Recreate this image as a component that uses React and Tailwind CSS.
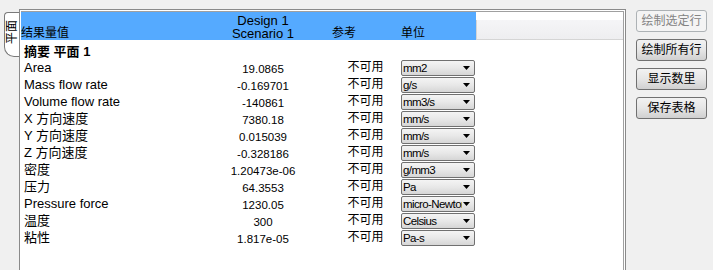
import React from 'react';

const rows = [
  { name: 'Area', value: '19.0865', unit: 'mm2' },
  { name: 'Mass flow rate', value: '-0.169701', unit: 'g/s' },
  { name: 'Volume flow rate', value: '-140861', unit: 'mm3/s' },
  { name: 'X 方向速度', value: '7380.18', unit: 'mm/s' },
  { name: 'Y 方向速度', value: '0.015039', unit: 'mm/s' },
  { name: 'Z 方向速度', value: '-0.328186', unit: 'mm/s' },
  { name: '密度', value: '1.20473e-06', unit: 'g/mm3' },
  { name: '压力', value: '64.3553', unit: 'Pa' },
  { name: 'Pressure force', value: '1230.05', unit: 'micro-Newton' },
  { name: '温度', value: '300', unit: 'Celsius' },
  { name: '粘性', value: '1.817e-05', unit: 'Pa-s' },
];

const buttons = [
  { label: '绘制选定行', disabled: true },
  { label: '绘制所有行' },
  { label: '显示数里' },
  { label: '保存表格' },
];

const UnitSelect = ({ unit }) => (
  <div className="ml-[1px] mt-[1px] flex h-[16px] w-[74px] items-center rounded-[2px] border border-[#707070] bg-gradient-to-b from-[#f4f4f4] via-[#e8e8e8] to-[#d6d6d6]">
    <span className="flex-1 overflow-hidden whitespace-nowrap pl-[1px] text-[11.5px] leading-[14px] tracking-[-0.6px] text-black">
      {unit}
    </span>
    <svg className="mr-[4px] ml-[1px] shrink-0" width="7" height="4" viewBox="0 0 7 4">
      <path d="M0 0h7L3.5 4z" fill="#000" />
    </svg>
  </div>
);

export default function App() {
  return (
    <div className="flex h-[270px] w-[713px] overflow-hidden bg-[#f0f0f0] font-['Liberation_Sans','Noto_Sans_CJK_SC',sans-serif] text-black">
      {/* side tab */}
      <div className="w-[19px] shrink-0 pl-[4px] pt-[12px]">
        <div className="flex h-[45px] w-[15px] items-center justify-center rounded-tl-[4px] rounded-bl-[10px] border border-r-0 border-[#7a7a7a] bg-white pb-[4px]">
          <span className="rotate-180 text-[12px] leading-[13px] [text-orientation:sideways] [writing-mode:vertical-rl]">
            平面
          </span>
        </div>
      </div>

      {/* results table */}
      <div className="mt-[9px] h-[261px] w-[607px] shrink-0 border-x border-t border-[#8a8a8a] bg-white pl-[1px] pr-[1px] pt-[1px]">
        <div className="h-full border-r border-t border-[#a0a0a0]">
          <div className="flex h-[28px]">
            <div className="flex w-[455px] bg-[#55aaff] pt-[2px] text-[13px] leading-[13px]">
              <div className="flex w-[209px] flex-col">
                <span className="h-[13px]" />
                <span className="text-[12px]">结果量值</span>
              </div>
              <div className="flex w-[66px] flex-col items-center whitespace-nowrap">
                <span className="h-[13px]">Design 1</span>
                <span className="h-[13px]">Scenario 1</span>
              </div>
              <div className="w-[35px]" />
              <div className="flex w-[69px] flex-col pl-[1px]">
                <span className="h-[13px]" />
                <span className="text-[12px]">参考</span>
              </div>
              <div className="flex w-[76px] flex-col pl-[1px]">
                <span className="h-[13px]" />
                <span className="text-[12px]">单位</span>
              </div>
            </div>
            <div className="flex flex-1 flex-col">
              <div className="h-[8px] bg-white" />
              <div className="h-[20px] border-b border-l border-[#d5d5d5] bg-gradient-to-b from-[#f5f5f7] to-[#eeeef0]" />
            </div>
          </div>

          <div className="h-[19px] pl-[3px] pt-[4px] text-[13px] font-bold leading-[15px]">摘要 平面 1</div>

          {rows.map((r) => (
            <div key={r.name} className="flex h-[17px]">
              <div className="w-[209px] pl-[3px] text-[13px] leading-[18px] whitespace-nowrap">{r.name}</div>
              <div className="w-[66px] text-center text-[11.5px] leading-[20px] whitespace-nowrap">{r.value}</div>
              <div className="w-[35px]" />
              <div className="w-[69px] text-center text-[12px] leading-[17px]">不可用</div>
              <div className="w-[76px]">
                <UnitSelect unit={r.unit} />
              </div>
            </div>
          ))}
        </div>
      </div>

      {/* action buttons */}
      <div className="flex flex-1 flex-col gap-[7px] pl-[10px] pt-[10px]">
        {buttons.map((b) => (
          <button
            key={b.label}
            type="button"
            disabled={b.disabled}
            className={
              b.disabled
                ? 'h-[22px] w-[71px] rounded-[3px] border border-[#adb2b5] bg-[#f4f4f4] text-[12px] leading-[20px] text-[#838383]'
                : 'h-[22px] w-[71px] rounded-[3px] border border-[#707070] bg-gradient-to-b from-[#f2f2f2] via-[#e6e6e6] to-[#d0d0d0] text-[12px] leading-[20px] text-black'
            }
          >
            {b.label}
          </button>
        ))}
      </div>
    </div>
  );
}
